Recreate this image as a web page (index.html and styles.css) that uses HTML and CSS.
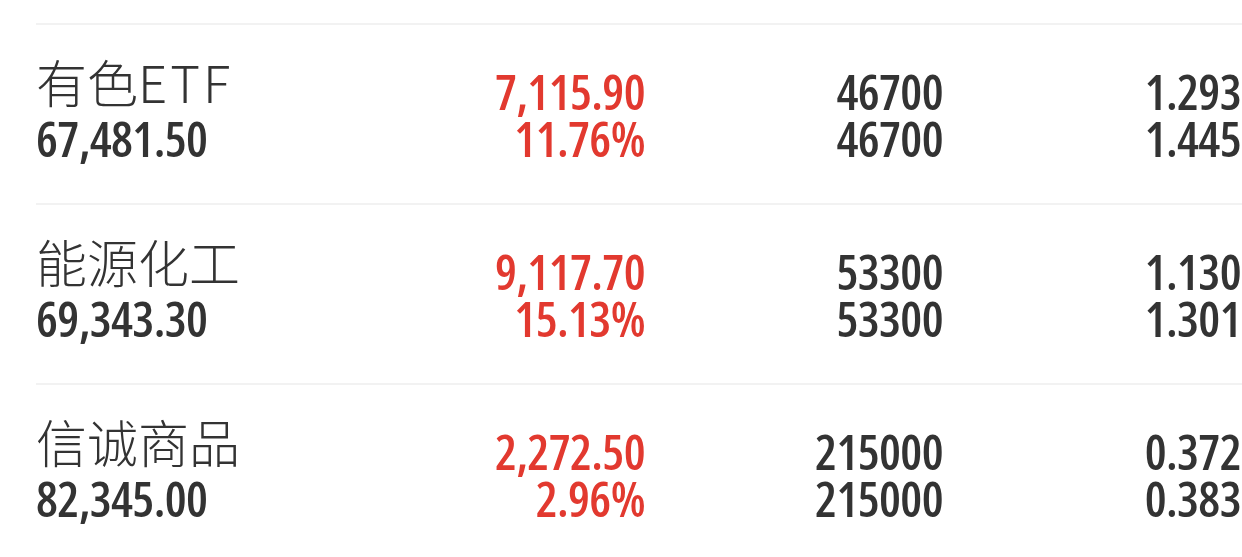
FILE: index.html
```html
<!DOCTYPE html>
<html lang="zh-CN">
<head>
<meta charset="utf-8">
<title>持仓列表</title>
<link rel="stylesheet" href="styles.css">
</head>
<body>
<div class="list">
  <div class="row">
    <div class="col name">
      <div class="title">有色<span class="latin">ETF</span></div>
      <div class="num">67,481.50</div>
    </div>
    <div class="col red">
      <div class="num">7,115.90</div>
      <div class="num">11.76%</div>
    </div>
    <div class="col">
      <div class="num">46700</div>
      <div class="num">46700</div>
    </div>
    <div class="col">
      <div class="num">1.293</div>
      <div class="num">1.445</div>
    </div>
  </div>
  <div class="row">
    <div class="col name">
      <div class="title">能源化工</div>
      <div class="num">69,343.30</div>
    </div>
    <div class="col red">
      <div class="num">9,117.70</div>
      <div class="num">15.13%</div>
    </div>
    <div class="col">
      <div class="num">53300</div>
      <div class="num">53300</div>
    </div>
    <div class="col">
      <div class="num">1.130</div>
      <div class="num">1.301</div>
    </div>
  </div>
  <div class="row">
    <div class="col name">
      <div class="title">信诚商品</div>
      <div class="num">82,345.00</div>
    </div>
    <div class="col red">
      <div class="num">2,272.50</div>
      <div class="num">2.96%</div>
    </div>
    <div class="col">
      <div class="num">215000</div>
      <div class="num">215000</div>
    </div>
    <div class="col">
      <div class="num">0.372</div>
      <div class="num">0.383</div>
    </div>
  </div>
</div>
</body>
</html>
```

FILE: styles.css
```css
html, body {
  margin: 0;
  padding: 0;
  background: #ffffff;
}
body {
  width: 1242px;
  height: 557px;
  overflow: hidden;
  color: #333333;
  font-family: "Open Sans", "Roboto Condensed", sans-serif;
}
.list {
  padding-top: 23px;
}
.row {
  display: flex;
  margin-left: 36px;
  padding: 43px 1px 41px 0;
  border-top: 2px solid #f2f2f2;
}
.col {
  width: 298px;
  flex: none;
  text-align: right;
}
.col.name {
  flex: 1 1 auto;
  width: auto;
  text-align: left;
}
.red {
  color: #e2392f;
}
.num {
  font-size: 49px;
  font-weight: 600;
  font-stretch: 75%;
  letter-spacing: -0.6px;
  line-height: 47px;
  white-space: nowrap;
}
.title {
  font-family: "Noto Sans CJK SC", "Noto Sans", sans-serif;
  font-size: 51px;
  font-weight: 300;
  line-height: 47px;
  margin-top: -10px;
  margin-bottom: 10px;
  white-space: nowrap;
}
.latin {
  letter-spacing: 3px;
}
```
